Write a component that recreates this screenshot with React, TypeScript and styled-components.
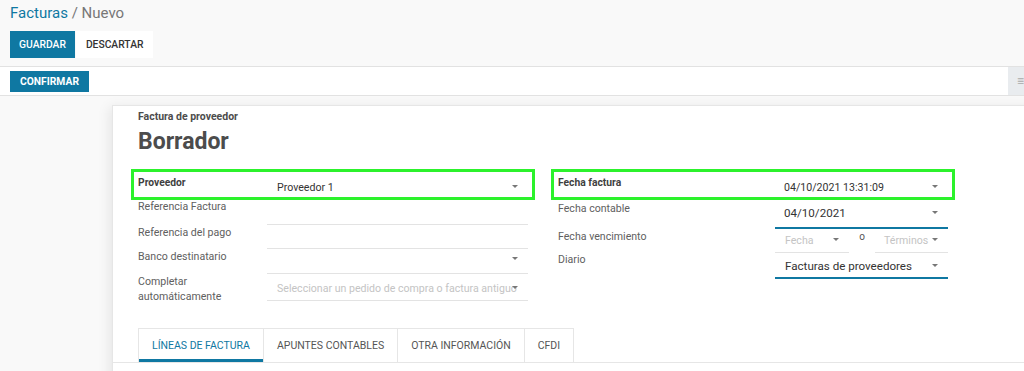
import styled, { createGlobalStyle } from 'styled-components'

const BLUE = '#0f78a2'

const GlobalStyle = createGlobalStyle`
    html, body {
        margin: 0;
        padding: 0;
        background: #f9f9f9;
        font-family: Roboto, "Noto Sans", "Liberation Sans", sans-serif;
        color: #4c4c4c;
        overflow: hidden;
    }
    * { box-sizing: border-box; }
`

const Page = styled.div`
    width: 1024px;
    height: 371px;
    overflow: hidden;
    display: flex;
    flex-direction: column;
    & > * { flex-shrink: 0; }
`

const ControlPanel = styled.div`
    background: #f9f9f9;
    padding: 3px 10px 8px;
    display: flex;
    flex-direction: column;
    gap: 8px;
`

const Breadcrumb = styled.div`
    font-size: 15px;
    line-height: 20px;
    color: #777;
    a { color: ${BLUE}; text-decoration: none; }
`

const ButtonRow = styled.div`
    display: flex;
    gap: 1px;
`

const Button = styled.button<{ $primary?: boolean }>`
    font-family: inherit;
    font-size: 10.3px;
    font-weight: 500;
    border: none;
    border-radius: 0;
    height: 27px;
    padding: 0 ${(p) => (p.$primary ? 9 : 10)}px;
    background: ${(p) => (p.$primary ? BLUE : '#fff')};
    color: ${(p) => (p.$primary ? '#fff' : '#333')};
`

const StatusBar = styled.div`
    border-top: 1px solid #e2e2e2;
    border-bottom: 1px solid #e2e2e2;
    background: #fff;
    height: 30px;
    display: flex;
    align-items: center;
    justify-content: space-between;
    padding-left: 10px;
`

const SmallButton = styled(Button)`
    height: 21px;
    padding: 0 10px;
    font-weight: 700;
`

const StatusMenu = styled.div`
    width: 16px;
    height: 100%;
    background: #e9ecef;
    color: #aaa;
    font-size: 12px;
    display: flex;
    align-items: center;
    padding-left: 9px;
`

const Body = styled.div`
    flex: 1;
    background: #f9f9f9;
    padding: 9px 0 0 112px;
`

const Sheet = styled.div`
    width: 960px;
    height: 300px;
    background: #fff;
    border: 1px solid #e6e6e6;
    box-shadow: -3px 2px 12px rgba(0, 0, 0, 0.08);
    padding: 4px 0 0 25px;
`

const SubTitle = styled.div`
    font-size: 10.5px;
    font-weight: 700;
    line-height: 14px;
    color: #4c4c4c;
`

const Title = styled.h1`
    margin: 4px 0 13px;
    font-size: 23px;
    line-height: 28px;
    font-weight: 700;
    color: #4c4c4c;
`

const Groups = styled.div`
    display: flex;
    gap: 30px;
    align-items: flex-start;
`

const Group = styled.div<{ $label: number; $field: number }>`
    display: grid;
    grid-template-columns: ${(p) => `${p.$label}px ${p.$field}px`};
`

const Mark = styled.div`
    grid-column: 1 / span 2;
    display: grid;
    grid-template-columns: subgrid;
    height: 17px;
    margin: 7px 0;
    outline: 3px solid #2cf22c;
    outline-offset: 4px;
`

const Label = styled.div<{ $bold?: boolean; $top?: number }>`
    font-size: ${(p) => (p.$bold ? 10.3 : 10.6)}px;
    line-height: 14px;
    font-weight: ${(p) => (p.$bold ? 700 : 400)};
    color: ${(p) => (p.$bold ? '#3f3f3f' : '#606060')};
    padding-top: ${(p) => p.$top ?? 0}px;
`

const TwoLineLabel = styled(Label)`
    line-height: 15px;
`

const Field = styled.div<{ $h: number; $line?: 'grey' | 'blue' | 'none'; $top: number; $pad?: number }>`
    height: ${(p) => p.$h}px;
    padding: ${(p) => p.$top}px 10px 0 ${(p) => p.$pad ?? 10}px;
    border-bottom: ${(p) =>
        p.$line === 'blue' ? `2px solid ${BLUE}` : p.$line === 'none' ? 'none' : '1px solid #e3e3e3'};
`

const Line = styled.div<{ $big?: boolean; $muted?: boolean }>`
    display: flex;
    align-items: center;
    height: ${(p) => (p.$big ? 16 : 15)}px;
    font-size: ${(p) => (p.$big ? 11.6 : 10.6)}px;
    color: ${(p) => (p.$muted ? '#c4c4c4' : '#333')};
    white-space: nowrap;
`

const Text = styled.span`
    flex: 1;
    min-width: 0;
`

const Caret = styled.span`
    flex-shrink: 0;
    width: 0;
    height: 0;
    margin: -2px 0 0 2px;
    border-left: 3px solid transparent;
    border-right: 3px solid transparent;
    border-top: 3px solid #777;
`

const Split = styled.div`
    display: flex;
`

const Or = styled.span`
    width: 26px;
    text-align: center;
    font-size: 10px;
    line-height: 14px;
    color: #555;
    padding-top: 1px;
`

const Tabs = styled.div`
    margin: 24px 0 0 -25px;
    padding-left: 25px;
    display: flex;
    border-bottom: 1px solid #e6e6e6;
`

const Tab = styled.div<{ $active?: boolean }>`
    height: 34px;
    padding: 0 13px;
    display: flex;
    align-items: center;
    font-size: 10.5px;
    color: ${(p) => (p.$active ? BLUE : '#555')};
    border: 1px solid #e6e6e6;
    border-bottom: none;
    margin-right: -1px;
    box-shadow: ${(p) => (p.$active ? `inset 0 -3px 0 ${BLUE}` : 'none')};
`

export default function App() {
    return (
        <Page>
            <GlobalStyle />
            <ControlPanel>
                <Breadcrumb>
                    <a>Facturas</a> / Nuevo
                </Breadcrumb>
                <ButtonRow>
                    <Button $primary>GUARDAR</Button>
                    <Button>DESCARTAR</Button>
                </ButtonRow>
            </ControlPanel>
            <StatusBar>
                <SmallButton $primary>CONFIRMAR</SmallButton>
                <StatusMenu>≡</StatusMenu>
            </StatusBar>
            <Body>
                <Sheet>
                    <SubTitle>Factura de proveedor</SubTitle>
                    <Title>Borrador</Title>
                    <Groups>
                        <Group $label={129} $field={261}>
                            <Mark>
                                <Label $bold>Proveedor</Label>
                                <Field $h={17} $top={4} $line="none">
                                    <Line>
                                        <Text>Proveedor 1</Text>
                                        <Caret />
                                    </Line>
                                </Field>
                            </Mark>
                            <Label>Referencia Factura</Label>
                            <Field $h={25} $top={4} />
                            <Label $top={1}>Referencia del pago</Label>
                            <Field $h={24} $top={4} />
                            <Label $top={1}>Banco destinatario</Label>
                            <Field $h={25} $top={3}>
                                <Line>
                                    <Text />
                                    <Caret />
                                </Line>
                            </Field>
                            <TwoLineLabel>
                                Completar
                                <br />
                                automáticamente
                            </TwoLineLabel>
                            <Field $h={27} $top={7}>
                                <Line $muted>
                                    <Text>Seleccionar un pedido de compra o factura antiguo</Text>
                                    <Caret style={{ marginLeft: -6 }} />
                                </Line>
                            </Field>
                        </Group>
                        <Group $label={217} $field={173}>
                            <Mark>
                                <Label $bold>Fecha factura</Label>
                                <Field $h={17} $top={4} $pad={9} $line="none">
                                    <Line>
                                        <Text>04/10/2021 13:31:09</Text>
                                        <Caret />
                                    </Line>
                                </Field>
                            </Mark>
                            <Label $top={2}>Fecha contable</Label>
                            <Field $h={29} $top={5} $pad={9} $line="blue">
                                <Line $big>
                                    <Text>04/10/2021</Text>
                                    <Caret />
                                </Line>
                            </Field>
                            <Label $top={1}>Fecha vencimiento</Label>
                            <Split>
                                <Field $h={24} $top={4} $pad={10} style={{ flex: 1 }}>
                                    <Line $muted>
                                        <Text>Fecha</Text>
                                        <Caret />
                                    </Line>
                                </Field>
                                <Or>o</Or>
                                <Field $h={24} $top={4} $pad={9} style={{ flex: 1 }}>
                                    <Line $muted>
                                        <Text>Términos</Text>
                                        <Caret />
                                    </Line>
                                </Field>
                            </Split>
                            <Label>Diario</Label>
                            <Field $h={26} $top={5} $pad={10} $line="blue">
                                <Line $big>
                                    <Text>Facturas de proveedores</Text>
                                    <Caret />
                                </Line>
                            </Field>
                        </Group>
                    </Groups>
                    <Tabs>
                        <Tab $active>LÍNEAS DE FACTURA</Tab>
                        <Tab>APUNTES CONTABLES</Tab>
                        <Tab>OTRA INFORMACIÓN</Tab>
                        <Tab>CFDI</Tab>
                    </Tabs>
                </Sheet>
            </Body>
        </Page>
    )
}
